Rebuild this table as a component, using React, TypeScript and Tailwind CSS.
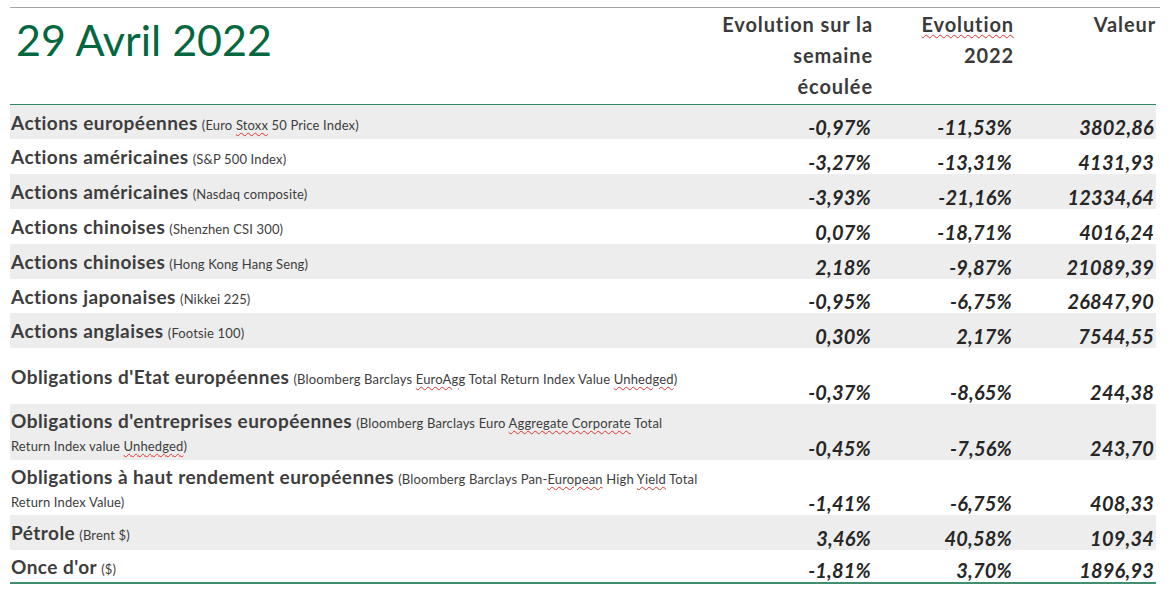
import React from 'react'

const font = { fontFamily: 'Lato, "Open Sans", Arial, sans-serif' }

// spell-check squiggle, as in the source document
function Sq({ children }: { children: React.ReactNode }) {
  return (
    <span className="underline decoration-wavy decoration-[#e0332c] decoration-1 underline-offset-2">
      {children}
    </span>
  )
}

type Row = {
  label: string
  sub: React.ReactNode
  week: string
  ytd: string
  value: string
  h: string
}

const rows: Row[] = [
  { label: 'Actions européennes', sub: <>(Euro <Sq>Stoxx</Sq> 50 Price Index)</>, week: '-0,97%', ytd: '-11,53%', value: '3802,86', h: 'h-[34px]' },
  { label: 'Actions américaines', sub: '(S&P 500 Index)', week: '-3,27%', ytd: '-13,31%', value: '4131,93', h: 'h-[35px]' },
  { label: 'Actions américaines', sub: '(Nasdaq composite)', week: '-3,93%', ytd: '-21,16%', value: '12334,64', h: 'h-[35px]' },
  { label: 'Actions chinoises', sub: '(Shenzhen CSI 300)', week: '0,07%', ytd: '-18,71%', value: '4016,24', h: 'h-[35px]' },
  { label: 'Actions chinoises', sub: '(Hong Kong Hang Seng)', week: '2,18%', ytd: '-9,87%', value: '21089,39', h: 'h-[35px]' },
  { label: 'Actions japonaises', sub: '(Nikkei 225)', week: '-0,95%', ytd: '-6,75%', value: '26847,90', h: 'h-[34px]' },
  { label: 'Actions anglaises', sub: '(Footsie 100)', week: '0,30%', ytd: '2,17%', value: '7544,55', h: 'h-[35px]' },
  {
    label: "Obligations d'Etat européennes",
    sub: <>(Bloomberg Barclays <Sq>EuroAgg</Sq> Total Return Index Value <Sq>Unhedged</Sq>)</>,
    week: '-0,37%', ytd: '-8,65%', value: '244,38', h: 'h-[56px]',
  },
  {
    label: "Obligations d'entreprises européennes",
    sub: <>(Bloomberg Barclays Euro <Sq>Aggregate Corporate</Sq> Total<br />Return Index value <Sq>Unhedged</Sq>)</>,
    week: '-0,45%', ytd: '-7,56%', value: '243,70', h: 'h-[56px]',
  },
  {
    label: 'Obligations à haut rendement européennes',
    sub: <>(Bloomberg Barclays Pan-<Sq>European</Sq> High <Sq>Yield</Sq> Total<br />Return Index Value)</>,
    week: '-1,41%', ytd: '-6,75%', value: '408,33', h: 'h-[55px]',
  },
  { label: 'Pétrole', sub: '(Brent $)', week: '3,46%', ytd: '40,58%', value: '109,34', h: 'h-[35px]' },
  { label: "Once d'or", sub: '($)', week: '-1,81%', ytd: '3,70%', value: '1896,93', h: 'h-[34px]' },
]

export default function App() {
  return (
    <div className="w-[1170px] h-[591px] bg-white overflow-hidden" style={font}>
      <div className="ml-[10px] mt-[7px] w-[1150px] border-t border-[#a6a6a6]" />
      <div className="ml-[10px] w-[1146px]">
        {/* Header */}
        <div className="grid grid-cols-[1fr_172px_141px_142px] h-[97px] border-b border-[#2f8a63] text-[#3a3a3a]">
          <div className="pl-[6px] pt-[7px] text-[43px] leading-[50px] text-[#03673f]">29 Avril 2022</div>
          <div className="text-right text-[20px] font-bold tracking-[0.9px] leading-[31px] pt-[1px]">
            Evolution sur la<br />semaine<br />écoulée
          </div>
          <div className="text-right text-[20px] font-bold tracking-[0.9px] leading-[31px] pt-[1px]">
            <Sq>Evolution</Sq><br />2022
          </div>
          <div className="text-right text-[20px] font-bold tracking-[0.9px] leading-[31px] pt-[1px]">Valeur</div>
        </div>

        {/* Rows */}
        {rows.map((r, i) => (
          <div
            key={i}
            className={`grid grid-cols-[1fr_172px_141px_142px] ${r.h} ${i % 2 === 0 ? 'bg-[#ededed]' : 'bg-white'} ${
              i === rows.length - 1 ? 'border-b-2 border-[#3f8f6e]' : ''
            }`}
          >
            <div className="flex items-center pl-[1px] pt-[3px] text-[#3d3d3d]">
              <div className="leading-[22px]">
                <span className="text-[19px] font-bold tracking-[0.45px]">{r.label}</span>{' '}
                <span className="text-[13px] tracking-[0.15px]">{r.sub}</span>
              </div>
            </div>
            {[r.week, r.ytd, r.value].map((n, j) => (
              <div key={j} className="flex items-end justify-end pb-[1px] pr-[2px] text-[20px] leading-[22px] font-bold italic tracking-[0.2px] text-[#262626]">
                {n}
              </div>
            ))}
          </div>
        ))}
      </div>
    </div>
  )
}
